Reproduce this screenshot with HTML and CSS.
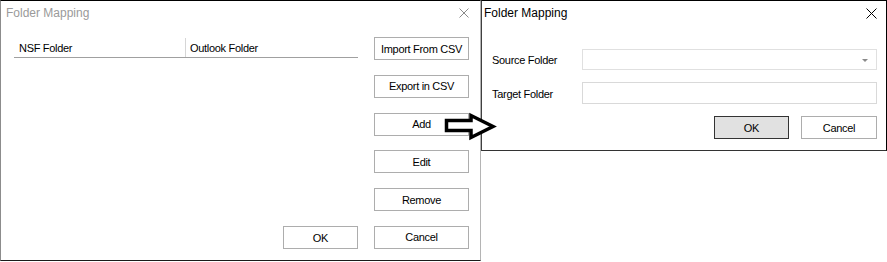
FILE: index.html
```html
<!DOCTYPE html>
<html>
<head>
    <title>Folder Mapping</title>
    <link rel="stylesheet" href="styles.css">
</head>
<body>
    <div class="screen">
        <div class="dialog main">
            <div class="titlebar">
                <span class="title">Folder Mapping</span>
                <svg class="close" width="10" height="10" viewBox="0 0 10 10">
                    <path d="M0.5 0.5 L9.5 9.5 M9.5 0.5 L0.5 9.5" stroke="#8a8a8a" stroke-width="1" fill="none"/>
                </svg>
            </div>
            <div class="main-body">
                <div class="list-col">
                    <div class="list-head">
                        <div class="col col-nsf">NSF Folder</div>
                        <div class="col col-outlook">Outlook Folder</div>
                    </div>
                    <button class="btn btn-ok">OK</button>
                </div>
                <div class="btn-col">
                    <button class="btn">Import From CSV</button>
                    <button class="btn">Export in CSV</button>
                    <button class="btn">Add</button>
                    <button class="btn">Edit</button>
                    <button class="btn">Remove</button>
                    <button class="btn">Cancel</button>
                </div>
            </div>
        </div>

        <div class="dialog edit">
            <div class="titlebar">
                <span class="title">Folder Mapping</span>
                <svg class="close" width="11" height="11" viewBox="0 0 11 11">
                    <path d="M0.5 0.5 L10.5 10.5 M10.5 0.5 L0.5 10.5" stroke="#000" stroke-width="1" fill="none"/>
                </svg>
            </div>
            <div class="form">
                <label class="label">Source Folder</label>
                <div class="combo">
                    <span class="combo-arrow"></span>
                </div>
                <label class="label">Target Folder</label>
                <div class="textbox"></div>
            </div>
            <div class="actions">
                <button class="btn btn-default">OK</button>
                <button class="btn btn-cancel">Cancel</button>
            </div>
        </div>

        <!-- arrow drawn on top of both windows -->
        <svg class="arrow" width="60" height="34" viewBox="0 0 60 34">
            <path d="M6.5 11.5 H31 V6.5 L53 17.5 L31 28.5 V21.5 H6.5 Z" fill="#fff" stroke="#000" stroke-width="3.5" stroke-linejoin="miter"/>
        </svg>
    </div>
</body>
</html>
```

FILE: styles.css
```css
body {
    margin: 0;
    background-color: #ffffff;
    font-family: "Liberation Sans", Arial, sans-serif;
    font-size: 11px;
    color: #000;
}

.screen {
    position: relative;
    display: flex;
    align-items: flex-start;
    width: 887px;
    height: 262px;
}

.dialog {
    box-sizing: border-box;
    background-color: #ffffff;
    display: flex;
    flex-direction: column;
}

.titlebar {
    box-sizing: border-box;
    height: 27px;
    padding-bottom: 3px;
    display: flex;
    align-items: center;
    justify-content: space-between;
    flex-shrink: 0;
}

.title {
    font-size: 12px;
}

/* left window (inactive) */
.main {
    width: 481px;
    height: 261px;
    border-top: 1px solid #000;
    border-left: 1px solid #8c8c8c;
    border-right: 1px solid #b4b4b4;
    border-bottom: 1px solid #1a1a1a;
}

.main .titlebar {
    padding-left: 5px;
    padding-right: 11px;
}

.main .title {
    color: #9a9a9a;
}

.main-body {
    display: flex;
    padding: 9px 0 10px 13px;
    flex: 1;
}

.list-col {
    width: 344px;
    display: flex;
    flex-direction: column;
    justify-content: space-between;
    margin-top: 1px;
}

.list-head {
    display: flex;
    height: 19px;
    border-bottom: 1px solid #a0a0a0;
}

.col {
    display: flex;
    align-items: center;
    letter-spacing: -0.3px;
}

.col-nsf {
    width: 166px;
    padding-left: 5px;
    border-right: 1px solid #d6d6d6;
}

.col-outlook {
    padding-left: 4px;
}

.btn-col {
    margin-left: 16px;
    display: flex;
    flex-direction: column;
    gap: 14.8px;
}

.btn {
    box-sizing: border-box;
    width: 95px;
    height: 23px;
    padding: 0;
    background-color: #ffffff;
    border: 1px solid #adadad;
    font-family: "Liberation Sans", Arial, sans-serif;
    font-size: 11px;
    letter-spacing: -0.3px;
    color: #000;
}

.btn-ok {
    width: 75px;
    align-self: flex-end;
    margin-bottom: 1px;
}

/* right window (active) */
.edit {
    width: 406px;
    height: 151px;
    border: 1px solid #000;
    border-left-color: #404040;
    border-bottom-color: #333;
}

.edit .titlebar {
    padding-left: 2px;
    padding-right: 9px;
}

.form {
    display: grid;
    grid-template-columns: 90px 295px;
    grid-template-rows: 21px 22px;
    row-gap: 12px;
    padding: 21px 9px 0 10px;
}

.label {
    display: flex;
    align-items: center;
    padding-top: 1px;
    letter-spacing: -0.3px;
}

.combo {
    position: relative;
    border: 1px solid #e0e0e0;
}

.combo-arrow {
    position: absolute;
    right: 8px;
    top: 9px;
    border-left: 3px solid transparent;
    border-right: 3px solid transparent;
    border-top: 3px solid #8a8a8a;
}

.textbox {
    border: 1px solid #d9d9d9;
}

.actions {
    display: flex;
    justify-content: flex-end;
    gap: 12px;
    padding: 12px 9px 0 0;
}

.btn-default {
    width: 75px;
    background-color: #e1e1e1;
    border-color: #333;
}

.btn-cancel {
    width: 76px;
}

.arrow {
    position: absolute;
    left: 440px;
    top: 109px;
}
```
